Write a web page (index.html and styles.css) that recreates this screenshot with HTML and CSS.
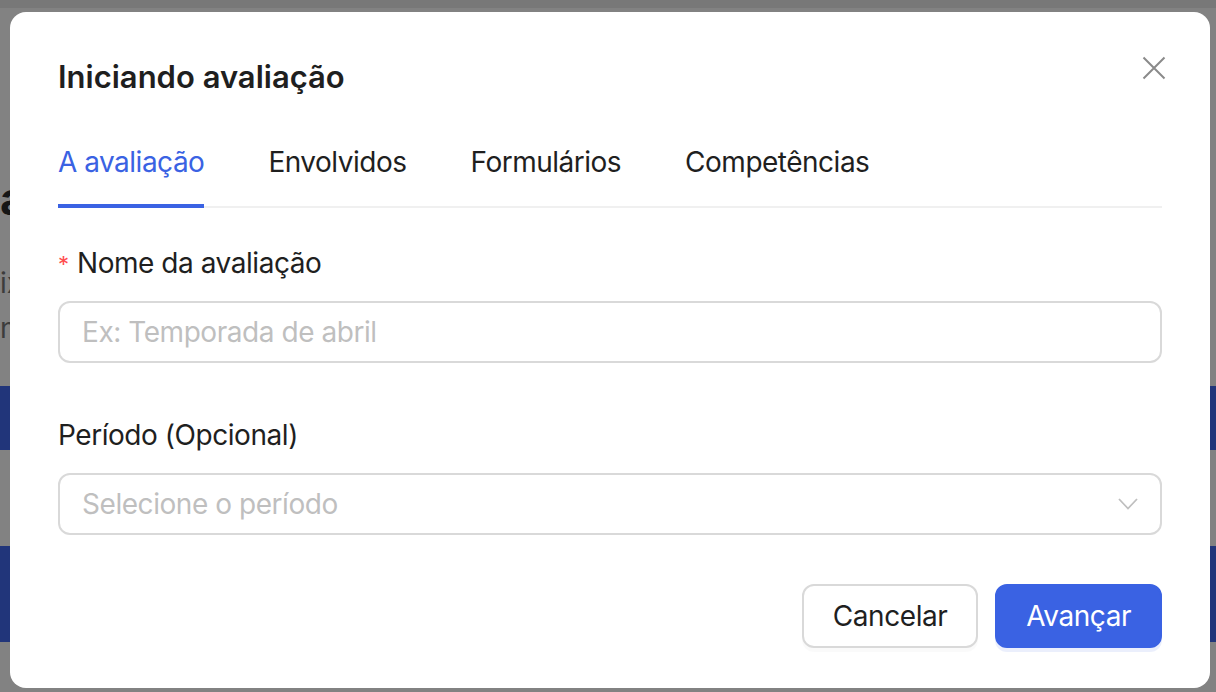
FILE: index.html
```html
<!DOCTYPE html>
<html lang="pt-BR">
<head>
<meta charset="utf-8">
<title>Iniciando avaliação</title>
<link rel="stylesheet" href="styles.css">
</head>
<body>
<div class="page">
  <div class="topbar"></div>
  <div class="bg-col">
    <h1 class="bg-heading">a</h1>
    <p class="bg-text">ix<br>n</p>
  </div>
  <div class="bg-banner bg-banner-1"></div>
  <div class="bg-banner bg-banner-2"></div>
</div>

<div class="modal" role="dialog" aria-labelledby="modal-title">
  <button class="modal-close" aria-label="Fechar">
    <svg width="24" height="24" viewBox="0 0 24 24" fill="none" stroke="currentColor" stroke-width="2" stroke-linecap="butt">
      <path d="M1.5 1.5 L22.5 22.5 M22.5 1.5 L1.5 22.5"/>
    </svg>
  </button>
  <h2 class="modal-title" id="modal-title">Iniciando avaliação</h2>

  <nav class="tabs">
    <span class="tab tab-active">A avaliação</span>
    <span class="tab">Envolvidos</span>
    <span class="tab">Formulários</span>
    <span class="tab">Competências</span>
  </nav>

  <form class="form">
    <div class="form-item">
      <label class="form-label"><span class="required">*</span>Nome da avaliação</label>
      <div class="field"><span class="placeholder">Ex: Temporada de abril</span></div>
    </div>
    <div class="form-item">
      <label class="form-label">Período (Opcional)</label>
      <div class="field field-select">
        <span class="placeholder">Selecione o período</span>
        <svg class="chevron" width="20" height="14" viewBox="0 0 20 14" fill="none" stroke="currentColor" stroke-width="1.8">
          <path d="M1 2 L10 11.5 L19 2"/>
        </svg>
      </div>
    </div>
  </form>

  <div class="footer">
    <button class="btn btn-default">Cancelar</button>
    <button class="btn btn-primary">Avançar</button>
  </div>
</div>
</body>
</html>
```

FILE: styles.css
```css
html, body {
  margin: 0;
  padding: 0;
}
body {
  width: 1216px;
  height: 692px;
  overflow: hidden;
  background: #828282;
  font-family: "Inter", "Noto Sans", "Liberation Sans", sans-serif;
  position: relative;
}

/* background page (already dimmed) */
.page {
  display: flex;
  flex-direction: column;
}
.topbar {
  height: 8px;
  background: #787878;
}
.bg-col {
  display: flex;
  flex-direction: column;
  align-items: flex-start;
}
.bg-heading {
  margin: 162px 0 0;
  font-size: 46px;
  line-height: 56px;
  font-weight: 700;
  color: #161616;
}
.bg-text {
  margin: 35px 0 0;
  font-size: 28px;
  line-height: 45px;
  color: #3c3c3c;
}
.bg-banner {
  background: #21357a;
}
.bg-banner-1 {
  margin-top: 35px;
  height: 64px;
}
.bg-banner-2 {
  margin-top: 96px;
  height: 96px;
}

/* modal */
.modal {
  position: absolute;
  left: 10px;
  top: 12px;
  width: 1200px;
  height: 676px;
  box-sizing: border-box;
  padding: 45px 48px 40px;
  background: #ffffff;
  border-radius: 16px;
  display: flex;
  flex-direction: column;
  color: #1f1f1f;
  letter-spacing: -0.45px;
}
.modal-close {
  position: absolute;
  top: 44px;
  right: 44px;
  width: 24px;
  height: 24px;
  padding: 0;
  border: 0;
  background: none;
  color: #8a8a8a;
  display: flex;
}
.modal-title {
  margin: 0;
  font-size: 31px;
  line-height: 40px;
  font-weight: 600;
  color: #1f1f1f;
  letter-spacing: 0;
}

.tabs {
  margin-top: 19px;
  display: flex;
  gap: 64px;
  border-bottom: 2px solid #f0f0f0;
}
.tab {
  position: relative;
  padding: 24px 0 22px;
  font-size: 28px;
  line-height: 44px;
  color: #1f1f1f;
  letter-spacing: -0.5px;
}
.tab-active {
  color: #3a62e3;
}
.tab-active::after {
  content: "";
  position: absolute;
  left: 0;
  right: 0;
  bottom: -2px;
  height: 4px;
  background: #3a62e3;
}

.form {
  margin-top: 33px;
  display: flex;
  flex-direction: column;
  gap: 50px;
}
.form-item {
  display: flex;
  flex-direction: column;
  gap: 16px;
}
.form-label {
  display: flex;
  align-items: center;
  font-size: 28px;
  line-height: 44px;
  color: #1f1f1f;
}
.required {
  width: 11px;
  margin-right: 8px;
  color: #ff4d4f;
  font-size: 22px;
  line-height: 1;
  align-self: flex-start;
  margin-top: 12px;
}
.field {
  height: 62px;
  box-sizing: border-box;
  border: 2px solid #d9d9d9;
  border-radius: 12px;
  padding: 0 22px;
  display: flex;
  align-items: center;
  justify-content: space-between;
}
.placeholder {
  font-size: 28px;
  line-height: 44px;
  color: #bfbfbf;
}
.chevron {
  color: #bfbfbf;
}

.footer {
  margin-top: auto;
  display: flex;
  justify-content: flex-end;
  gap: 17px;
}
.btn {
  height: 64px;
  box-sizing: border-box;
  padding: 0 29px;
  border-radius: 12px;
  font-family: inherit;
  font-size: 28px;
  line-height: 44px;
  letter-spacing: -0.45px;
}
.btn-default {
  background: #ffffff;
  border: 2px solid #d9d9d9;
  color: #1f1f1f;
  box-shadow: 0 4px 0 rgba(0, 0, 0, 0.02);
}
.btn-primary {
  background: #3a62e3;
  border: 2px solid #3a62e3;
  color: #ffffff;
  box-shadow: 0 4px 0 rgba(58, 98, 227, 0.1);
}
```
